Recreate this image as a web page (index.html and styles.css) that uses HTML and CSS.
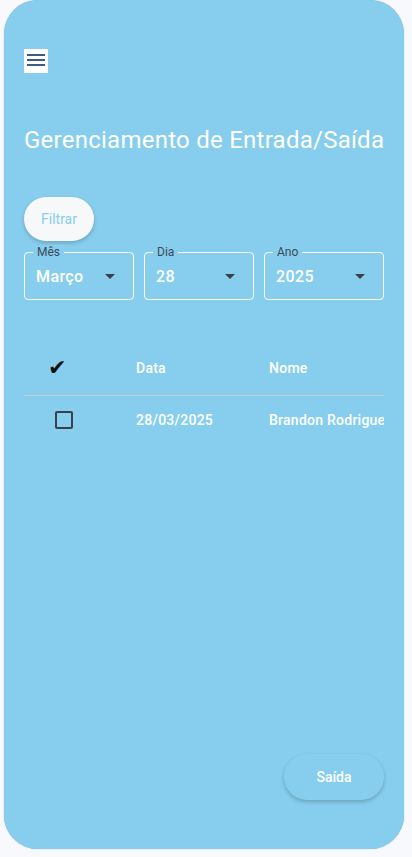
FILE: index.html
```html
<!DOCTYPE html>
<html lang="pt">
<head>
<meta charset="utf-8">
<link rel="stylesheet" href="styles.css">
</head>
<body>
<div class="card">
  <div class="menu-btn">
    <svg width="24" height="24" viewBox="0 0 24 24"><rect x="3" y="5" width="18" height="2" fill="#3b5d86"/><rect x="3" y="10" width="18" height="2" fill="#3b5d86"/><rect x="3" y="15" width="18" height="2" fill="#3b5d86"/></svg>
  </div>
  <h1 class="title">Gerenciamento de Entrada/Saída</h1>
  <button class="filter-btn">Filtrar</button>
  <div class="selects">
    <div class="select w110"><span class="label">Mês</span><span class="value">Março</span><span class="arrow"></span></div>
    <div class="select w110"><span class="label">Dia</span><span class="value">28</span><span class="arrow"></span></div>
    <div class="select w120"><span class="label">Ano</span><span class="value">2025</span><span class="arrow"></span></div>
  </div>
  <div class="table">
    <div class="row head">
      <div class="c1"><span class="check">✔</span></div>
      <div class="c2">Data</div>
      <div class="c3">Nome</div>
    </div>
    <div class="row body">
      <div class="c1"><span class="box"></span></div>
      <div class="c2">28/03/2025</div>
      <div class="c3">Brandon Rodrigue</div>
    </div>
  </div>
  <div class="spacer"></div>
  <div class="footer"><button class="exit-btn">Saída</button></div>
</div>
</body>
</html>
```
FILE: styles.css
```css
* { box-sizing: border-box; }
html, body { margin: 0; padding: 0; }
body {
  background: #f8f9fd;
  font-family: Roboto, "Noto Sans", sans-serif;
  width: 412px;
  height: 857px;
  overflow: hidden;
}
.card {
  margin-left: 4px;
  width: 400px;
  height: 849px;
  background: #87ceee;
  border-radius: 34px;
  padding: 49px 20px 0 20px;
  display: flex;
  flex-direction: column;
  box-shadow: 0 0 1px rgba(40,80,130,0.6);
}
.menu-btn {
  width: 24px;
  height: 24px;
  background: #ffffff;
  display: flex;
}
.title {
  margin: 51px 0 0 0;
  font-weight: 400;
  font-size: 24px;
  line-height: 32px;
  color: #ffffff;
  white-space: nowrap;
  letter-spacing: 0.25px;
}
.filter-btn {
  align-self: flex-start;
  margin-top: 41px;
  height: 44px;
  width: 70px;
  border: none;
  border-radius: 22px;
  background: #f7f8fa;
  color: #87ceee;
  font-family: Roboto, sans-serif;
  font-size: 14px;
  box-shadow: 0 2px 4px rgba(0,0,0,0.2);
  padding: 0;
}
.selects {
  display: flex;
  gap: 10px;
  margin-top: 11px;
}
.select {
  position: relative;
  height: 48px;
  border: 1px solid #ffffff;
  border-radius: 4px;
  display: flex;
  align-items: center;
  padding: 0 12px 0 11px;
}
.w110 { width: 110px; }
.w120 { width: 120px; }
.label {
  position: absolute;
  top: -8px;
  left: 8px;
  padding: 0 4px;
  background: #87ceee;
  font-size: 12px;
  line-height: 14px;
  color: #3a4a56;
}
.value {
  flex: 1;
  color: #ffffff;
  font-size: 16px;
  font-weight: 500;
  letter-spacing: 0.4px;
}
.arrow {
  width: 0;
  height: 0;
  border-left: 5px solid transparent;
  border-right: 5px solid transparent;
  border-top: 5px solid #3a4048;
  margin-right: 6px;
  margin-top: 1px;
}
.table {
  margin-top: 44px;
}
.row {
  display: flex;
  align-items: center;
  color: #ffffff;
  font-size: 14px;
  font-weight: 500;
  letter-spacing: 0.25px;
}
.row.head {
  height: 52px;
  border-bottom: 1px solid #c4ccd2;
  padding-bottom: 4px;
}
.row.body {
  height: 48px;
}
.c1 { width: 112px; display: flex; }
.c2 { width: 133px; }
.c3 { flex: 1; white-space: nowrap; overflow: hidden; }
.check {
  color: #111;
  font-size: 22px;
  font-family: "DejaVu Sans", sans-serif;
  line-height: 22px;
  margin-left: 24px;
}
.box {
  width: 18px;
  height: 18px;
  border: 2px solid #3b4048;
  border-radius: 2px;
  margin-left: 31px;
}
.spacer { flex: 1; }
.footer {
  display: flex;
  justify-content: flex-end;
  margin-bottom: 49px;
}
.exit-btn {
  width: 100px;
  height: 46px;
  border: none;
  border-radius: 23px;
  background: #87ceee;
  color: #ffffff;
  font-family: Roboto, sans-serif;
  font-size: 14px;
  font-weight: 500;
  box-shadow: 0 2px 4px rgba(0,0,0,0.22);
  padding: 0;
}
```
